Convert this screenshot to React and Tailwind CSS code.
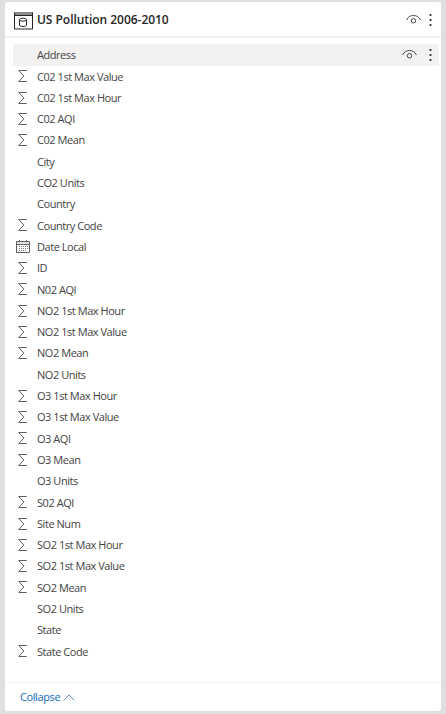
const fields = [
  ['Address', ''],
  ['C02 1st Max Value', 'sum'],
  ['C02 1st Max Hour', 'sum'],
  ['C02 AQI', 'sum'],
  ['C02 Mean', 'sum'],
  ['City', ''],
  ['CO2 Units', ''],
  ['Country', ''],
  ['Country Code', 'sum'],
  ['Date Local', 'date'],
  ['ID', 'sum'],
  ['N02 AQI', 'sum'],
  ['NO2 1st Max Hour', 'sum'],
  ['NO2 1st Max Value', 'sum'],
  ['NO2 Mean', 'sum'],
  ['NO2 Units', ''],
  ['O3 1st Max Hour', 'sum'],
  ['O3 1st Max Value', 'sum'],
  ['O3 AQI', 'sum'],
  ['O3 Mean', 'sum'],
  ['O3 Units', ''],
  ['S02 AQI', 'sum'],
  ['Site Num', 'sum'],
  ['SO2 1st Max Hour', 'sum'],
  ['SO2 1st Max Value', 'sum'],
  ['SO2 Mean', 'sum'],
  ['SO2 Units', ''],
  ['State', ''],
  ['State Code', 'sum'],
];

function Sigma() {
  return (
    <svg className="ml-[5px]" width="10" height="12" viewBox="0 0 10 12" fill="none" stroke="#605e5c" strokeWidth="1">
      <path d="M8.8 .5H.8L5.8 6 .8 11.5h8" />
    </svg>
  );
}

function CalendarIcon() {
  return (
    <svg className="ml-[3px]" width="14" height="13" viewBox="0 0 14 13" fill="none" stroke="#605e5c">
      <path d="M.5 1.5h13v11H.5zM.5 4.5h13M3.5 0v2.5M10.5 0v2.5" />
      <path d="M3 6.5h9M3 8.5h9M3 10.5h7" stroke="#777" strokeDasharray="1 1" />
      <path d="M1 3h12" stroke="#ccc" />
    </svg>
  );
}

function TableIcon() {
  return (
    <svg width="19" height="18" viewBox="0 0 19 18" fill="none" stroke="#252423">
      <path d="M0 1.5h19" stroke="#888" strokeWidth="3" />
      <path d="M.5.5v16.5h18V.5M.5 3.5h18" />
      <ellipse cx="9" cy="7.7" rx="3.5" ry="1.5" />
      <path d="M5.5 7.7v5.3c0 2 7 2 7 0V7.7" />
    </svg>
  );
}

function Eye() {
  return (
    <svg width="15" height="11" viewBox="0 0 15 11" fill="none" stroke="#484644">
      <path d="M.6 6C2 2.8 4.5 1.5 7.5 1.5S13 2.8 14.4 6" />
      <circle cx="7.5" cy="6.8" r="2.2" />
    </svg>
  );
}

function More() {
  return (
    <svg width="3" height="12" viewBox="0 0 3 12" fill="#333">
      <path d="M.6 0H2.4v2H.6zM.6 5H2.4v2H.6zM.6 10H2.4v2H.6z" />
    </svg>
  );
}

export default function App() {
  return (
    <div className="h-[714px] w-[446px] bg-[#e1dfdd] pl-[5px] pr-[5px] pt-[2px] font-['Open_Sans','Noto_Sans',sans-serif]">
      <main className="flex h-[709px] flex-col rounded-[2px] bg-white">
        <header className="flex h-[36px] shrink-0 items-center border-b-2 border-[#f3f2f1] pl-[9px] pr-[9px]">
          <div className="mt-[3px]"><TableIcon /></div>
          <h1 className="ml-[4px] mt-[2px] whitespace-nowrap text-[12px] font-semibold tracking-[-0.04px] text-[#252423]">US Pollution 2006-2010</h1>
          <div className="ml-auto flex items-center gap-[8px] pt-[1px]"><Eye /><More /></div>
        </header>
        <ul className="ml-[8px] mr-[2px] mt-[6px]">
          {fields.map(([name, kind], i) => (
            <li key={name} className={i === 0 ? 'flex h-[21.7px] items-center bg-[#f3f2f1] pr-[7px]' : 'flex h-[21.3px] items-center'}>
              <span className="flex w-[24px] shrink-0 items-center">
                {kind === 'sum' && <Sigma />}
                {kind === 'date' && <CalendarIcon />}
              </span>
              <span className={i === 0 ? 'whitespace-nowrap text-[11px] tracking-[-0.45px] text-[#444342]' : 'whitespace-nowrap pt-[1px] text-[11px] tracking-[-0.45px] text-[#444342]'}>{name}</span>
              {i === 0 && <span className="ml-auto flex items-center gap-[12px]"><Eye /><More /></span>}
            </li>
          ))}
        </ul>
        <footer className="mt-auto flex h-[29px] items-center border-t border-[#f3f2f1] pl-[15px]">
          <button className="flex items-center gap-[3px] text-[11px] tracking-[-0.4px] text-[#0f6cbd]">
            Collapse
            <svg width="12" height="7" viewBox="0 0 12 7" fill="none" stroke="#5b8fc9"><path d="M.7 6.3 6 1l5.3 5.3" /></svg>
          </button>
        </footer>
      </main>
    </div>
  );
}
